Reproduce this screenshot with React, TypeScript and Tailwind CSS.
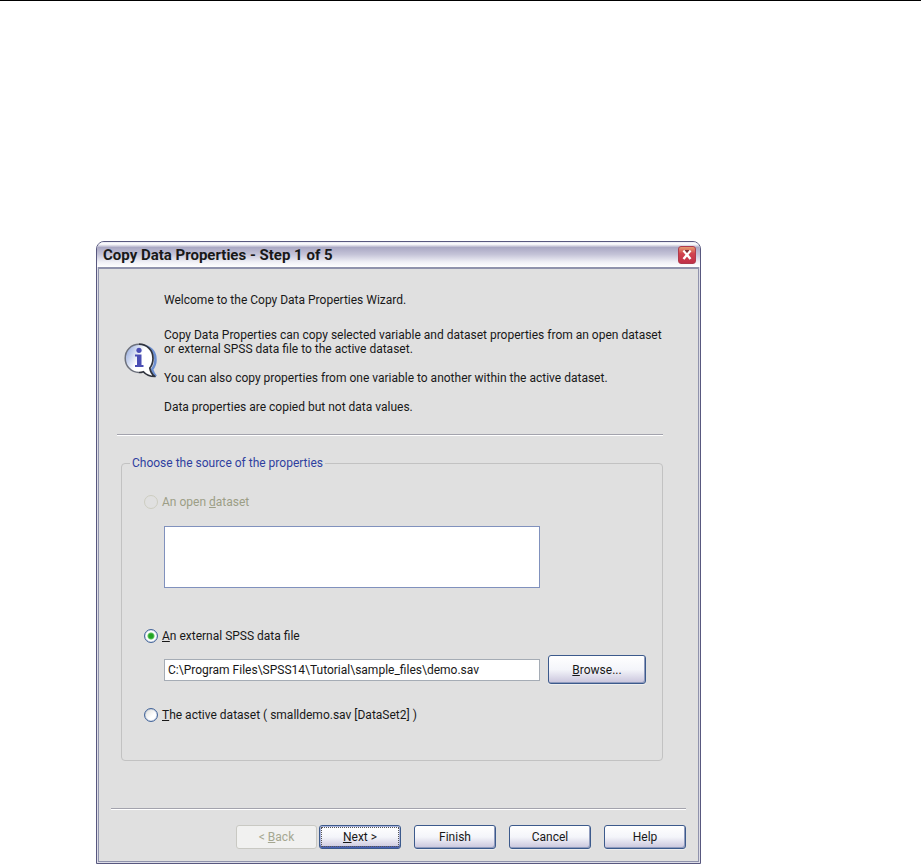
import { useState, type ComponentProps, type ReactNode } from "react";
import { clsx } from "clsx";

function InfoIcon() {
  return (
    <svg viewBox="0 0 34 36" className="mt-[50px] h-9 w-[34px] shrink-0" aria-hidden="true">
      <defs>
        <linearGradient id="bubble" x1="0" y1="0.1" x2="1" y2="0.7">
          <stop offset="0" stopColor="#8fa6dc" />
          <stop offset="0.5" stopColor="#ffffff" />
          <stop offset="1" stopColor="#ffffff" />
        </linearGradient>
      </defs>
      <path
        d="M21 3C28 5 31.500 10 31.500 17c0 4-1.500 7-3.500 9.500 1 3 2 5 4 7"
        fill="none"
        stroke="#6d8fd0"
        strokeWidth="2.500"
      />
      <path
        d="M15 1.200C7.300 1.200 1.200 7.200 1.200 15.200S7.300 29.500 15 29.500c1.600 0 3-.3 4.400-.8 2.600 3 6 4.700 11.400 4.800-2.800-2-4.400-4.800-5-8.500 2-2.500 3.200-5.800 3.200-9.800C29 7.200 22.700 1.200 15 1.200Z"
        fill="url(#bubble)"
      />
      <path
        d="M15 1.200C7.300 1.200 1.200 7.200 1.200 15.200S7.300 29.500 15 29.500"
        fill="none"
        stroke="#6d717c"
        strokeWidth="1.500"
      />
      <path
        d="M15 1.200C22.700 1.200 29 7.200 29 15.200c0 4-1.200 7.300-3.200 9.800.6 3.700 2.200 6.500 5 8.500-5.400-.1-8.800-1.800-11.400-4.800-1.400.5-2.800.8-4.400.8"
        fill="none"
        stroke="#30343e"
        strokeWidth="1.700"
        strokeLinejoin="round"
      />
      <path d="M11 11.500h6.500V22h2v2H11v-2h2v-8.500h-2Z" fill="#4a4eb4" />
      <circle cx="15" cy="7.300" r="2.600" fill="#4a4eb4" />
    </svg>
  );
}

function CloseIcon() {
  return (
    <svg viewBox="0 0 16 16" className="size-full" aria-hidden="true">
      <path
        d="M4.500 3.500l7 8.500M11.500 3.500l-7 8.500"
        stroke="#ffffff"
        strokeWidth="2.400"
      />
      <path d="M5.500 3h5L8 6Z" fill="#7a3036" />
    </svg>
  );
}

function Button({ className, ...props }: ComponentProps<"button">) {
  return (
    <button
      type="button"
      className={clsx(
        "rounded-[3px] border border-[#3c5a8c] bg-linear-to-b from-white via-[#f4f5fa] via-50% to-[#c9c5dc] text-center shadow-[inset_-1px_-1px_0_#8f9bbd,0_1px_0_#eeeeee]",
        "disabled:border-[#c9c9c3] disabled:bg-none disabled:bg-[#f1f1f0] disabled:text-[#a5a791] disabled:shadow-none",
        className,
      )}
      {...props}
    />
  );
}

function Option({
  id,
  checked,
  disabled,
  onSelect,
  children,
}: {
  id: string;
  checked: boolean;
  disabled?: boolean;
  onSelect?: () => void;
  children: ReactNode;
}) {
  return (
    <div className="flex h-[14px] items-center gap-1">
      <input
        type="radio"
        name="source"
        id={id}
        checked={checked}
        disabled={disabled}
        onChange={onSelect}
        className="size-[14px] shrink-0 appearance-none rounded-full border border-[#44659a] bg-[linear-gradient(135deg,#dcdcd8,#ffffff_60%)] shadow-[inset_0_0_1px_#44659a] checked:bg-[radial-gradient(circle,#23a323_0_2px,#5cc45c_3px,#ffffff_4px)] disabled:border-[#cdcdc0] disabled:bg-none disabled:shadow-none"
      />
      <label htmlFor={id} className={clsx(disabled && "text-[#9c9e86]")}>
        {children}
      </label>
    </div>
  );
}

function Divider() {
  return <hr className="h-[2px] border-t border-b border-t-[#a3a3ad] border-b-white" />;
}

export default function App() {
  const [source, setSource] = useState("file");
  const [path, setPath] = useState(
    "C:\\Program Files\\SPSS14\\Tutorial\\sample_files\\demo.sav",
  );

  return (
    <div className="border-t border-black bg-white pt-60 pr-[220px] pl-24 font-[Roboto,'Liberation_Sans',sans-serif] text-[12px] leading-[14px] text-[#181818]">
      <div className="rounded-t-lg border border-[#58587f] bg-[#dddde8]">
        <header className="flex h-[25px] items-center justify-between rounded-t-[7px] bg-[linear-gradient(to_bottom,#e8e8f2_0,#ffffff_8%,#aaa8c4_22%,#c5c4d8_50%,#f0f0f6_80%,#ffffff)] pr-1 pl-[6px]">
          <h1 className="text-[15px] font-bold">Copy Data Properties - Step 1 of 5</h1>
          <button
            type="button"
            className="size-[18px] rounded-[3px] border border-[#b03a4c] bg-linear-to-b from-[#e39a70] via-[#d2444f] via-40% to-[#c03048]"
          >
            <CloseIcon />
          </button>
        </header>

        <div className="mx-px mb-px border border-t-2 border-[#9093ac] bg-[#e0e0e0]">
          <main className="pt-6 pr-[35px] pl-[18px]">
            <section className="flex items-start gap-[6px] pl-[7px]">
              <InfoIcon />
              <div className="pb-5">
                <p>Welcome to the Copy Data Properties Wizard.</p>
                <p className="mt-[21px]">
                  Copy Data Properties can copy selected variable and dataset properties from an open
                  dataset or external SPSS data file to the active dataset.
                </p>
                <p className="mt-[15px]">
                  You can also copy properties from one variable to another within the active
                  dataset.
                </p>
                <p className="mt-[15px]">Data properties are copied but not data values.</p>
              </div>
            </section>

            <Divider />

            <fieldset className="mt-5 ml-1 rounded-[4px] border border-[#c2c2c2] pr-4 pb-[38px] pl-[22px]">
              <legend className="-ml-[14px] px-[2px] text-[#2f3f9f]">
                Choose the source of the properties
              </legend>

              <div className="pt-[25px]">
                <Option id="open" checked={source === "open"} disabled>
                  An open <u>d</u>ataset
                </Option>
              </div>
              <div className="mt-[17px] flex gap-2 pl-5">
                <select
                  size={4}
                  aria-labelledby="open"
                  className="h-[62px] flex-1 appearance-none border border-[#8091bd] bg-white"
                />
                <div className="w-[98px]" />
              </div>

              <div className="mt-[41px]">
                <Option id="file" checked={source === "file"} onSelect={() => setSource("file")}>
                  <u>A</u>n external SPSS data file
                </Option>
              </div>
              <div className="mt-3 flex items-center gap-2 pl-5">
                <input
                  type="text"
                  aria-labelledby="file"
                  value={path}
                  onChange={(e) => setPath(e.target.value)}
                  className="h-[22px] min-w-0 flex-1 border border-[#a5acb5] bg-white px-[3px]"
                />
                <Button className="h-[29px] w-[98px]">
                  <u>B</u>rowse...
                </Button>
              </div>

              <div className="mt-6">
                <Option
                  id="active"
                  checked={source === "active"}
                  onSelect={() => setSource("active")}
                >
                  <u>T</u>he active dataset ( smalldemo.sav [DataSet2] )
                </Option>
              </div>
            </fieldset>
          </main>

          <footer className="mt-[47px] px-3 pb-3">
            <Divider />
            <div className="mt-[15px] flex justify-end gap-[13px]">
              <div className="flex gap-[2px]">
                <Button disabled className="h-6 w-[81px]">
                  &lt; <u>B</u>ack
                </Button>
                <Button className="h-6 w-[82px] border-[#2c4696] p-px shadow-[inset_0_-2px_0_#4a62b4,inset_0_0_0_1px_#a9b4dc]">
                  <span className="flex h-full items-center justify-center border border-dotted border-[#555555]">
                    <span>
                      <u>N</u>ext &gt;
                    </span>
                  </span>
                </Button>
              </div>
              <Button className="h-6 w-[82px]">Finish</Button>
              <Button className="h-6 w-[82px]">Cancel</Button>
              <Button className="h-6 w-[82px]">Help</Button>
            </div>
          </footer>
        </div>
      </div>
    </div>
  );
}
